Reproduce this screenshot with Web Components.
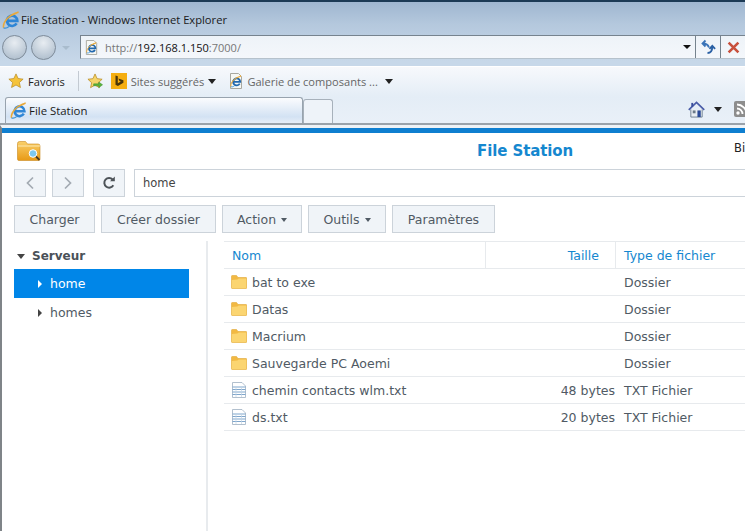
<!DOCTYPE html>
<html lang="fr"><head><meta charset="utf-8"><title>File Station</title>
<style>
html,body{margin:0;padding:0;background:#fff;overflow:hidden}
body{width:745px;height:531px;font-family:"DejaVu Sans",sans-serif}
</style></head><body>
<ie-window>
  <ie-title>File Station - Windows Internet Explorer</ie-title>
  <ie-address></ie-address>
  <ie-favs></ie-favs>
  <ie-tabs>File Station</ie-tabs>
</ie-window>
<fs-app>
  <fs-header>File Station</fs-header>
  <fs-nav>home</fs-nav>
  <fs-toolbar>
    <fs-btn w="81">Charger</fs-btn>
    <fs-btn w="115">Créer dossier</fs-btn>
    <fs-btn w="80" caret>Action</fs-btn>
    <fs-btn w="78" caret>Outils</fs-btn>
    <fs-btn w="103">Paramètres</fs-btn>
  </fs-toolbar>
  <fs-main>
    <fs-tree></fs-tree>
    <fs-table>
      <fs-row head name="Nom" size="Taille" type="Type de fichier"></fs-row>
      <fs-row icon="folder" name="bat to exe" type="Dossier"></fs-row>
      <fs-row icon="folder" name="Datas" type="Dossier"></fs-row>
      <fs-row icon="folder" name="Macrium" type="Dossier"></fs-row>
      <fs-row icon="folder" name="Sauvegarde PC Aoemi" type="Dossier"></fs-row>
      <fs-row icon="txt" name="chemin contacts wlm.txt" size="48 bytes" type="TXT Fichier"></fs-row>
      <fs-row icon="txt" name="ds.txt" size="20 bytes" type="TXT Fichier"></fs-row>
    </fs-table>
  </fs-main>
</fs-app>
<script>
const IE=(s='#2f86d6')=>`<path d="M14.600 12.400A5.200 5.200 0 1 1 15.300 9.800H5.200" fill="none" stroke="${s}" stroke-width="2.700"/><path d="M1.600 16.800C.4 11.500 7 3.400 16.500 1.200 12.500 3.200 10 4 8 5" fill="none" stroke="#e9a93a" stroke-width="1.500"/><path d="M1.600 16.800c1.500 .7 3.600 .2 5.400-1.300" fill="none" stroke="#3d93d8" stroke-width="1.300"/>`;
const ICONS={
 ie:`<svg viewBox="0 0 18 18" width="100%" height="100%">${IE()}</svg>`,
 page:`<svg viewBox="0 0 16 16" width="100%" height="100%"><path d="M2.500.5h8l3 3v12h-11z" fill="#f7f8f4" stroke="#a8a8a0"/><g transform="translate(1.800 2.200) scale(.68)">${IE('#2268ae')}</g></svg>`,
 star:`<svg viewBox="0 0 18 18" width="100%" height="100%"><path d="M9 1l2.400 5.200 5.600.7-4.200 3.800 1.200 5.600L9 13.500l-5 2.800 1.200-5.600L1 6.900l5.600-.7z" fill="#f5c33b" stroke="#b98a20" stroke-width=".8"/></svg>`,
 staradd:`<svg viewBox="0 0 18 18" width="100%" height="100%"><path d="M8.500 1l2.200 5 5.300.6-4 3.700 1.100 5.200-4.600-2.700-4.700 2.700 1.100-5.200L1 6.600 6.300 6z" fill="#f5d56a" stroke="#b98a20" stroke-width=".8"/><path d="M7 11.500h5.500V9.500l4 3-4 3v-2H7z" fill="#58b43c" stroke="#3c8a28" stroke-width=".5"/></svg>`,
 bing:`<svg viewBox="0 0 16 16" width="100%" height="100%"><rect width="16" height="16" fill="#f5ae10"/><path d="M4.500 2.500l2.300.8v7l3-1.700-1.500-.8-.9-2.300 5 1.800v2.500l-5.500 3.200-2.400-1.300z" fill="#4a3508"/></svg>`,
 home:`<svg viewBox="0 0 18 18" width="100%" height="100%"><path d="M3 9v8h12V9" fill="#e9eef2" stroke="#6d7f90"/><path d="M.8 9.500L9 1.500l8.200 8" fill="none" stroke="#4a5ca8" stroke-width="1.800"/><rect x="3.500" y="2" width="2" height="4" fill="#3a4e9c"/><rect x="10" y="10" width="3.500" height="7" fill="#2c4c98"/><rect x="5" y="10" width="3" height="3" fill="#6a7a88"/></svg>`,
 rss:`<svg viewBox="0 0 16 16" width="100%" height="100%"><rect width="16" height="16" rx="2" fill="#8d8d8d"/><circle cx="4" cy="12" r="1.700" fill="#fff"/><path d="M3 7.500a5.500 5.500 0 0 1 5.500 5.500M3 3.500a9.500 9.500 0 0 1 9.500 9.500" fill="none" stroke="#fff" stroke-width="1.800"/></svg>`,
 refresh:`<svg viewBox="0 0 16 16" width="100%" height="100%"><path d="M9 8.500C8 5.500 6 4.500 3 4.500M5.500 1.500L2.500 4.500l3 3" fill="none" stroke="#3b74b8" stroke-width="1.800"/><path d="M7.500 14c3.500 0 4.800-2 4.800-6.500M9.500 9.800l2.800-3 2.800 3" fill="none" stroke="#2a60a4" stroke-width="1.800"/></svg>`,
 close:`<svg viewBox="0 0 12 12" width="100%" height="100%"><path d="M1.500 1.500l9 9M10.500 1.500l-9 9" stroke="#c8503c" stroke-width="2.400"/></svg>`,
 app:`<svg viewBox="0 0 24 20" width="100%" height="100%"><defs><linearGradient id="g" x1="0" y1="0" x2="0" y2="1"><stop offset="0" stop-color="#f9cf6a"/><stop offset="1" stop-color="#e89a16"/></linearGradient></defs><path d="M.5 2.500q0-2 2-2h6l2 2.500h10.500q2 0 2 2V18q0 1.500-1.500 1.500H2q-1.500 0-1.500-1.500z" fill="url(#g)" stroke="#c98a1e" stroke-width=".6"/><path d="M1 5h22" stroke="#fff2c8" stroke-width=".8"/><circle cx="16" cy="12.500" r="3.800" fill="#7cc8ee" stroke="#fff" stroke-width="1"/><path d="M19 15.500l3.500 3.500" stroke="#4a3a20" stroke-width="1.800"/></svg>`,
 back:`<svg viewBox="0 0 10 14" width="100%" height="100%"><path d="M8 1.500L2.500 7 8 12.500" fill="none" stroke="#a3aab2" stroke-width="1.700"/></svg>`,
 fwd:`<svg viewBox="0 0 10 14" width="100%" height="100%"><path d="M2 1.500L7.500 7 2 12.500" fill="none" stroke="#a3aab2" stroke-width="1.700"/></svg>`,
 reload:`<svg viewBox="0 0 14 14" width="100%" height="100%"><path d="M11.300 9.200A4.800 4.800 0 1 1 10.600 3.500" fill="none" stroke="#4d5358" stroke-width="2"/><path d="M8 5.200h4.800V.5z" fill="#4d5358"/></svg>`,
 folder:`<svg viewBox="0 0 16 14" width="100%" height="100%"><path d="M.5 1.200q0-.7.7-.7h4.300l1.500 2h8q.7 0 .7.7v9.600q0 .7-.7 .7H1.200q-.7 0-.7-.7z" fill="#f2b943" stroke="#e0a838" stroke-width=".6"/><path d="M.8 5l5.500-.4 1.500-1h7.400v9.600H.8z" fill="#fbd571"/></svg>`,
 txt:`<svg viewBox="0 0 16 16" width="100%" height="100%"><path d="M1.500.5h9.500l3.500 3.500v11.500h-13z" fill="#fff" stroke="#9eb0c2" stroke-width=".8"/><path d="M1.500 5h13M1.500 7.500h13M1.500 10h13M1.500 12.500h13" stroke="#7fa6cc"/><path d="M5 5v10M10.500 5v10" stroke="#c3d4e4" stroke-width=".7"/></svg>`
};
function def(name,css,html){
 customElements.define(name,class extends HTMLElement{
  constructor(){super();const r=this.attachShadow({mode:'open'});
   const t=document.createElement('template');
   t.innerHTML=`<style>${css}</style>`+(typeof html==='function'?html(this):html);
   r.append(t.content.cloneNode(true));}
 });
}
customElements.define('ui-icon',class extends HTMLElement{
 constructor(){super();this.attachShadow({mode:'open'})}
 connectedCallback(){const s=this.getAttribute('s')||16,h=this.getAttribute('h')||s;
  this.shadowRoot.innerHTML=`<style>:host{display:block;flex:none;width:${s}px;height:${h}px}svg{display:block}</style>${ICONS[this.getAttribute('n')]||''}`}
});
const UI='"Open Sans","Noto Sans",sans-serif';
def('ie-window',`:host{display:block;height:125px;background:linear-gradient(#9fb6d0 0,#b4c8dd 22px,#c7d8e9 60px);border-top:2px solid #1c3a55;box-sizing:border-box;overflow:hidden;font-family:${UI};color:#1a1a1a}`,`<slot></slot>`);
def('ie-title',`:host{display:flex;align-items:center;gap:1px;height:33px;padding:2px 0 0 2px;font-size:11.200px;box-sizing:border-box}`,`<ui-icon n="ie" s="18"></ui-icon><span><slot></slot></span>`);
def('ie-address',`:host{display:flex;align-items:flex-start;height:25px;padding-left:2px}
 .c{width:25px;height:25px;border-radius:50%;border:1.500px solid #7e8b99;background:radial-gradient(circle at 50% 30%,#e8edf2,#bcc9d6 65%,#a8b8c7);box-sizing:border-box;margin-right:4px}
 .c+.c{margin-right:0}.d{width:0;height:0;border:4px solid transparent;border-top:4px solid #a9bccd;margin:11px 10px 0 6px}
 .bar{flex:1;height:24px;background:linear-gradient(#eef3f8,#f4f7fb);border:1px solid #76838e;border-right:0;border-bottom-color:#b6c2cc;display:flex;align-items:center;box-sizing:border-box;padding-left:3px}
 .u{flex:1;margin-left:6px;color:#777;font-size:11px}.u b{font-weight:400;color:#111}
 .a{width:0;height:0;border:4px solid transparent;border-top:4px solid #111;margin:4px 4px 0 0}
 .b{width:25px;height:100%;border-left:1px solid #76838e;display:flex;align-items:center;justify-content:center;box-sizing:border-box}
 .b+.b{justify-content:flex-start;padding-left:6px}`,
 `<div class="c"></div><div class="c"></div><div class="d"></div><div class="bar"><ui-icon n="page" s="15"></ui-icon><span class="u">http://<b>192.168.1.150</b>:7000/</span><i class="a"></i><div class="b"><ui-icon n="refresh" s="16"></ui-icon></div><div class="b"><ui-icon n="close" s="13"></ui-icon></div></div>`);
def('ie-favs',`:host{display:flex;align-items:center;height:31px;margin-top:6px;padding:0 0 2px 8px;font-size:11.100px;color:#333;background:linear-gradient(#f7f9fc,#e4edf6);border-top:1px solid #fff;box-sizing:border-box}
 .f{margin-left:4px;color:#222}.sep{width:1px;height:20px;background:#c3cad2;margin:0 8px 0 13px}.t{color:#666;margin-left:4px}
 .a{width:0;height:0;border:4px solid transparent;border-top:5px solid #222;margin:4px 12px 0 4px}`,
 `<ui-icon n="star" s="16"></ui-icon><span class="f">Favoris</span><i class="sep"></i><ui-icon n="staradd" s="17"></ui-icon><ui-icon n="bing" s="16" style="margin-left:7px"></ui-icon><span class="t">Sites suggérés</span><i class="a"></i><ui-icon n="page" s="16"></ui-icon><span class="t" style="margin-left:3px">Galerie de composants ...</span><i class="a" style="margin-left:7px"></i>`);
def('ie-tabs',`:host{display:flex;align-items:flex-end;height:28px;padding-left:5px;font-size:11.400px;background:linear-gradient(#e4edf6,#e9f0f8);border-bottom:2px solid #9aa2aa;box-sizing:border-box}
 .tab{width:298px;height:26px;display:flex;align-items:center;gap:2px;padding-left:4px;box-sizing:border-box;background:linear-gradient(#fbfcfe,#d3e2f3 75%,#e6eef8);border:1px solid #98a3ae;border-bottom:0;border-radius:3px 3px 0 0}
 .new{width:30px;height:24px;border:1px solid #a7b1bb;border-bottom:0;border-radius:3px 3px 0 0;background:#eef3f9;box-sizing:border-box}
 .r{margin-left:auto;display:flex;align-items:center;align-self:center;margin-top:-2px;margin-right:-5px}
 .a{width:0;height:0;border:4px solid transparent;border-top:5px solid #222;margin:4px 12px 0 9px}`,
 `<div class="tab"><ui-icon n="ie" s="17"></ui-icon><span><slot></slot></span></div><div class="new"></div><div class="r"><ui-icon n="home" s="17"></ui-icon><i class="a"></i><ui-icon n="rss" s="16"></ui-icon></div>`);
def('fs-app',`:host{display:flex;flex-direction:column;height:406px;border-top:3px solid #eef2f6;border-left:2px solid #7f8488;background:#fff;box-sizing:border-box;color:#505a64;font-family:"DejaVu Sans",sans-serif;font-size:12.500px;overflow:hidden}
 .blue{height:5px;background:#0f7fd0;flex:none}`,`<div class="blue"></div><slot></slot>`);
def('fs-header',`:host{display:flex;align-items:center;height:36px;padding-left:15px;flex:none;position:relative;box-sizing:border-box}
 .t{position:absolute;left:475px;top:9px;font:bold 15px "DejaVu Sans",sans-serif;color:#1587cf;white-space:nowrap;letter-spacing:-.1px}
 .b{position:absolute;left:732px;top:8px;color:#222;font-size:11.500px}`,
 `<ui-icon n="app" s="24" h="20"></ui-icon><span class="t"><slot></slot></span><span class="b">Bi</span>`);
def('fs-nav',`:host{display:flex;gap:6px;height:28px;margin-bottom:8px;padding-left:12px;flex:none}
 .b{width:32px;height:28px;border:1px solid #ccd3da;background:#f0f4f8;box-sizing:border-box;display:flex;align-items:center;justify-content:center}
 .b.r{margin-left:3px}.in{flex:1;height:28px;margin-left:3px;border:1px solid #ccd3da;border-right:0;box-sizing:border-box;display:flex;align-items:center;padding-left:8px;color:#444;font-size:11.500px}`,
 `<div class="b"><ui-icon n="back" s="10" h="14"></ui-icon></div><div class="b"><ui-icon n="fwd" s="10" h="14"></ui-icon></div><div class="b r"><ui-icon n="reload" s="14"></ui-icon></div><div class="in"><slot></slot></div>`);
def('fs-toolbar',`:host{display:flex;gap:6px;height:28px;padding-left:12px;flex:none}`,`<slot></slot>`);
def('fs-btn',`:host{display:flex;align-items:center;justify-content:center;gap:5px;height:28px;border:1px solid #ccd3da;background:#f0f4f8;box-sizing:border-box;color:#505a64;font-size:12.500px;white-space:nowrap}
 i{width:0;height:0;border:3.500px solid transparent;border-top:4px solid #505a64;margin-top:4px}`,
 h=>`<style>:host{width:${h.getAttribute('w')}px}</style><slot></slot>${h.hasAttribute('caret')?'<i></i>':''}`);
def('fs-main',`:host{display:flex;flex:1;margin-top:8px;min-height:0}`,`<slot></slot>`);
def('fs-tree',`:host{display:block;width:206px;flex:none;border-right:2px solid #e8ebee;box-sizing:border-box;padding:0 0 0 12px;font-size:12.500px;color:#505a64}
 .s{display:flex;align-items:center;height:28px;padding:1px 0 0 3px;box-sizing:border-box;font-weight:700;font-size:12px;color:#4a5158;gap:8px}
 .d{width:0;height:0;border:4.500px solid transparent;border-top:5px solid #444;margin-top:5px;margin-right:-1px}
 .n{display:flex;align-items:center;width:175px;height:29px;padding-left:24px;box-sizing:border-box;gap:8px}
 .n i{width:0;height:0;border:4px solid transparent;border-left:4.500px solid #444;margin-right:-4px}
 .sel{background:#0086e8;color:#fff}.sel i{border-left-color:#fff}`,
 `<div class="s"><span class="d"></span>Serveur</div><div class="n sel"><i></i>home</div><div class="n"><i></i>homes</div>`);
def('fs-table',`:host{display:block;flex:1;margin-left:16px;min-width:0}`,`<slot></slot>`);
def('fs-row',`:host{display:grid;grid-template-columns:262px 130px 1fr;height:27px;border-bottom:1px solid #e7eaed;box-sizing:border-box;align-items:center;color:#505a64;white-space:nowrap;font-size:12.500px}
 .n{display:flex;align-items:center;gap:5px;padding-left:7px;height:100%;box-sizing:border-box}
 .z{text-align:right;height:100%;display:flex;align-items:center;justify-content:flex-end;box-sizing:border-box;padding-right:1px}
 .t{padding-left:8px;height:100%;display:flex;align-items:center}
 :host([head]){color:#1587cf;border-top:1px solid #e7eaed;height:28px}
 :host([head]) .n{padding-left:8px}
 :host([head]) .n,:host([head]) .z{border-right:1px solid #e7eaed}
 :host([head]) .z{padding-right:16px}`,
 h=>{const i=h.getAttribute('icon');return `<div class="n">${i?`<ui-icon n="${i}" s="16" h="${i==='folder'?14:16}"></ui-icon>`:''}<span>${h.getAttribute('name')}</span></div><div class="z">${h.getAttribute('size')||''}</div><div class="t">${h.getAttribute('type')}</div>`});
</script>
</body></html>
